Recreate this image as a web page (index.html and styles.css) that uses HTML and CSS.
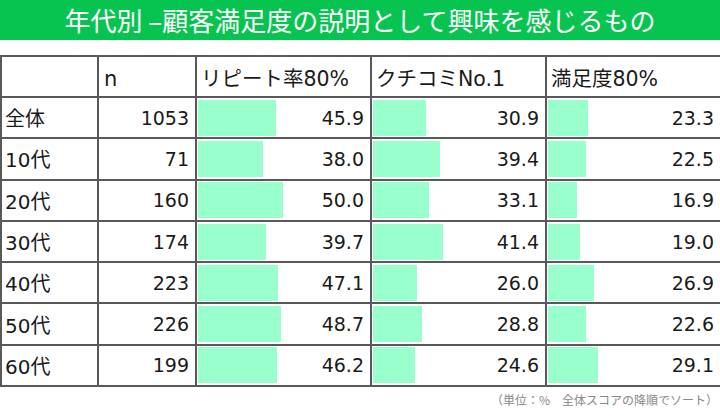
FILE: index.html
```html
<!DOCTYPE html>
<html lang="ja">
<head>
<meta charset="utf-8">
<link rel="stylesheet" href="styles.css">
</head>
<body>
<div class="title">年代別 –顧客満足度の説明として興味を感じるもの</div>
<table class="grid">
  <colgroup>
    <col class="c-label"><col class="c-n"><col class="c-bar"><col class="c-bar"><col class="c-bar">
  </colgroup>
  <thead>
    <tr class="head">
      <th></th>
      <th class="h-n">n</th>
      <th class="h-txt">リピート率80%</th>
      <th class="h-txt">クチコミNo.1</th>
      <th class="h-txt">満足度80%</th>
    </tr>
  </thead>
  <tbody>
    <tr><td class="lbl">全体</td><td class="num">1053</td>
      <td class="bc"><div class="cell"><div class="bar" style="width:78.0px"></div><span class="val">45.9</span></div></td>
      <td class="bc"><div class="cell"><div class="bar" style="width:52.5px"></div><span class="val">30.9</span></div></td>
      <td class="bc"><div class="cell"><div class="bar" style="width:39.6px"></div><span class="val">23.3</span></div></td></tr>
    <tr><td class="lbl">10代</td><td class="num">71</td>
      <td class="bc"><div class="cell"><div class="bar" style="width:64.6px"></div><span class="val">38.0</span></div></td>
      <td class="bc"><div class="cell"><div class="bar" style="width:67.0px"></div><span class="val">39.4</span></div></td>
      <td class="bc"><div class="cell"><div class="bar" style="width:38.3px"></div><span class="val">22.5</span></div></td></tr>
    <tr><td class="lbl">20代</td><td class="num">160</td>
      <td class="bc"><div class="cell"><div class="bar" style="width:85.0px"></div><span class="val">50.0</span></div></td>
      <td class="bc"><div class="cell"><div class="bar" style="width:56.3px"></div><span class="val">33.1</span></div></td>
      <td class="bc"><div class="cell"><div class="bar" style="width:28.7px"></div><span class="val">16.9</span></div></td></tr>
    <tr><td class="lbl">30代</td><td class="num">174</td>
      <td class="bc"><div class="cell"><div class="bar" style="width:67.5px"></div><span class="val">39.7</span></div></td>
      <td class="bc"><div class="cell"><div class="bar" style="width:70.4px"></div><span class="val">41.4</span></div></td>
      <td class="bc"><div class="cell"><div class="bar" style="width:32.3px"></div><span class="val">19.0</span></div></td></tr>
    <tr><td class="lbl">40代</td><td class="num">223</td>
      <td class="bc"><div class="cell"><div class="bar" style="width:80.1px"></div><span class="val">47.1</span></div></td>
      <td class="bc"><div class="cell"><div class="bar" style="width:44.2px"></div><span class="val">26.0</span></div></td>
      <td class="bc"><div class="cell"><div class="bar" style="width:45.7px"></div><span class="val">26.9</span></div></td></tr>
    <tr><td class="lbl">50代</td><td class="num">226</td>
      <td class="bc"><div class="cell"><div class="bar" style="width:82.8px"></div><span class="val">48.7</span></div></td>
      <td class="bc"><div class="cell"><div class="bar" style="width:49.0px"></div><span class="val">28.8</span></div></td>
      <td class="bc"><div class="cell"><div class="bar" style="width:38.4px"></div><span class="val">22.6</span></div></td></tr>
    <tr><td class="lbl">60代</td><td class="num">199</td>
      <td class="bc"><div class="cell"><div class="bar" style="width:78.5px"></div><span class="val">46.2</span></div></td>
      <td class="bc"><div class="cell"><div class="bar" style="width:41.8px"></div><span class="val">24.6</span></div></td>
      <td class="bc"><div class="cell"><div class="bar" style="width:49.5px"></div><span class="val">29.1</span></div></td></tr>
  </tbody>
</table>
<div class="note">（単位：%　全体スコアの降順でソート）</div>
</body>
</html>
```
FILE: styles.css
```css
html, body {
  margin: 0;
  padding: 0;
  background: #ffffff;
}
body {
  width: 720px;
  height: 416px;
  overflow: hidden;
  font-family: "DejaVu Sans", "Noto Sans CJK JP", sans-serif;
  color: #1a1a1a;
}
.title {
  height: 40px;
  line-height: 40px;
  background: #07c451;
  color: #ffffff;
  text-align: center;
  font-family: "Noto Sans CJK JP", sans-serif;
  font-size: 26px;
  white-space: nowrap;
}
.grid {
  margin-top: 15px;
  width: 720px;
  table-layout: fixed;
  border-collapse: collapse;
  font-size: 19px;
}
.c-label { width: 97px; }
.c-n { width: 98px; }
.c-bar { width: 175px; }
.grid th, .grid td {
  border: 2px solid #595959;
  padding: 0;
  white-space: nowrap;
  overflow: hidden;
}
.grid .head { height: 41px; }
.grid th {
  font-weight: normal;
  text-align: left;
  vertical-align: middle;
  font-size: 20.5px;
}
.grid .h-n { padding: 4px 0 0 5px; font-size: 21px; }
.grid .h-txt { padding: 0 0 0 4px; }
.grid tbody tr { height: 41.3px; }
.grid .lbl { padding-left: 3px; font-size: 20px; }
.grid .num { text-align: right; padding-right: 6px; }
.grid .bc { padding: 1px 6px 1px 1px; }
.cell {
  display: flex;
  align-items: center;
  height: 36px;
}
.bar {
  height: 100%;
  background: #99ffcc;
}
.val { margin-left: auto; }
.note {
  margin-top: 4px;
  text-align: right;
  padding-right: 2px;
  font-family: "Noto Sans CJK JP", sans-serif;
  font-size: 12px;
  color: #888888;
}
```
